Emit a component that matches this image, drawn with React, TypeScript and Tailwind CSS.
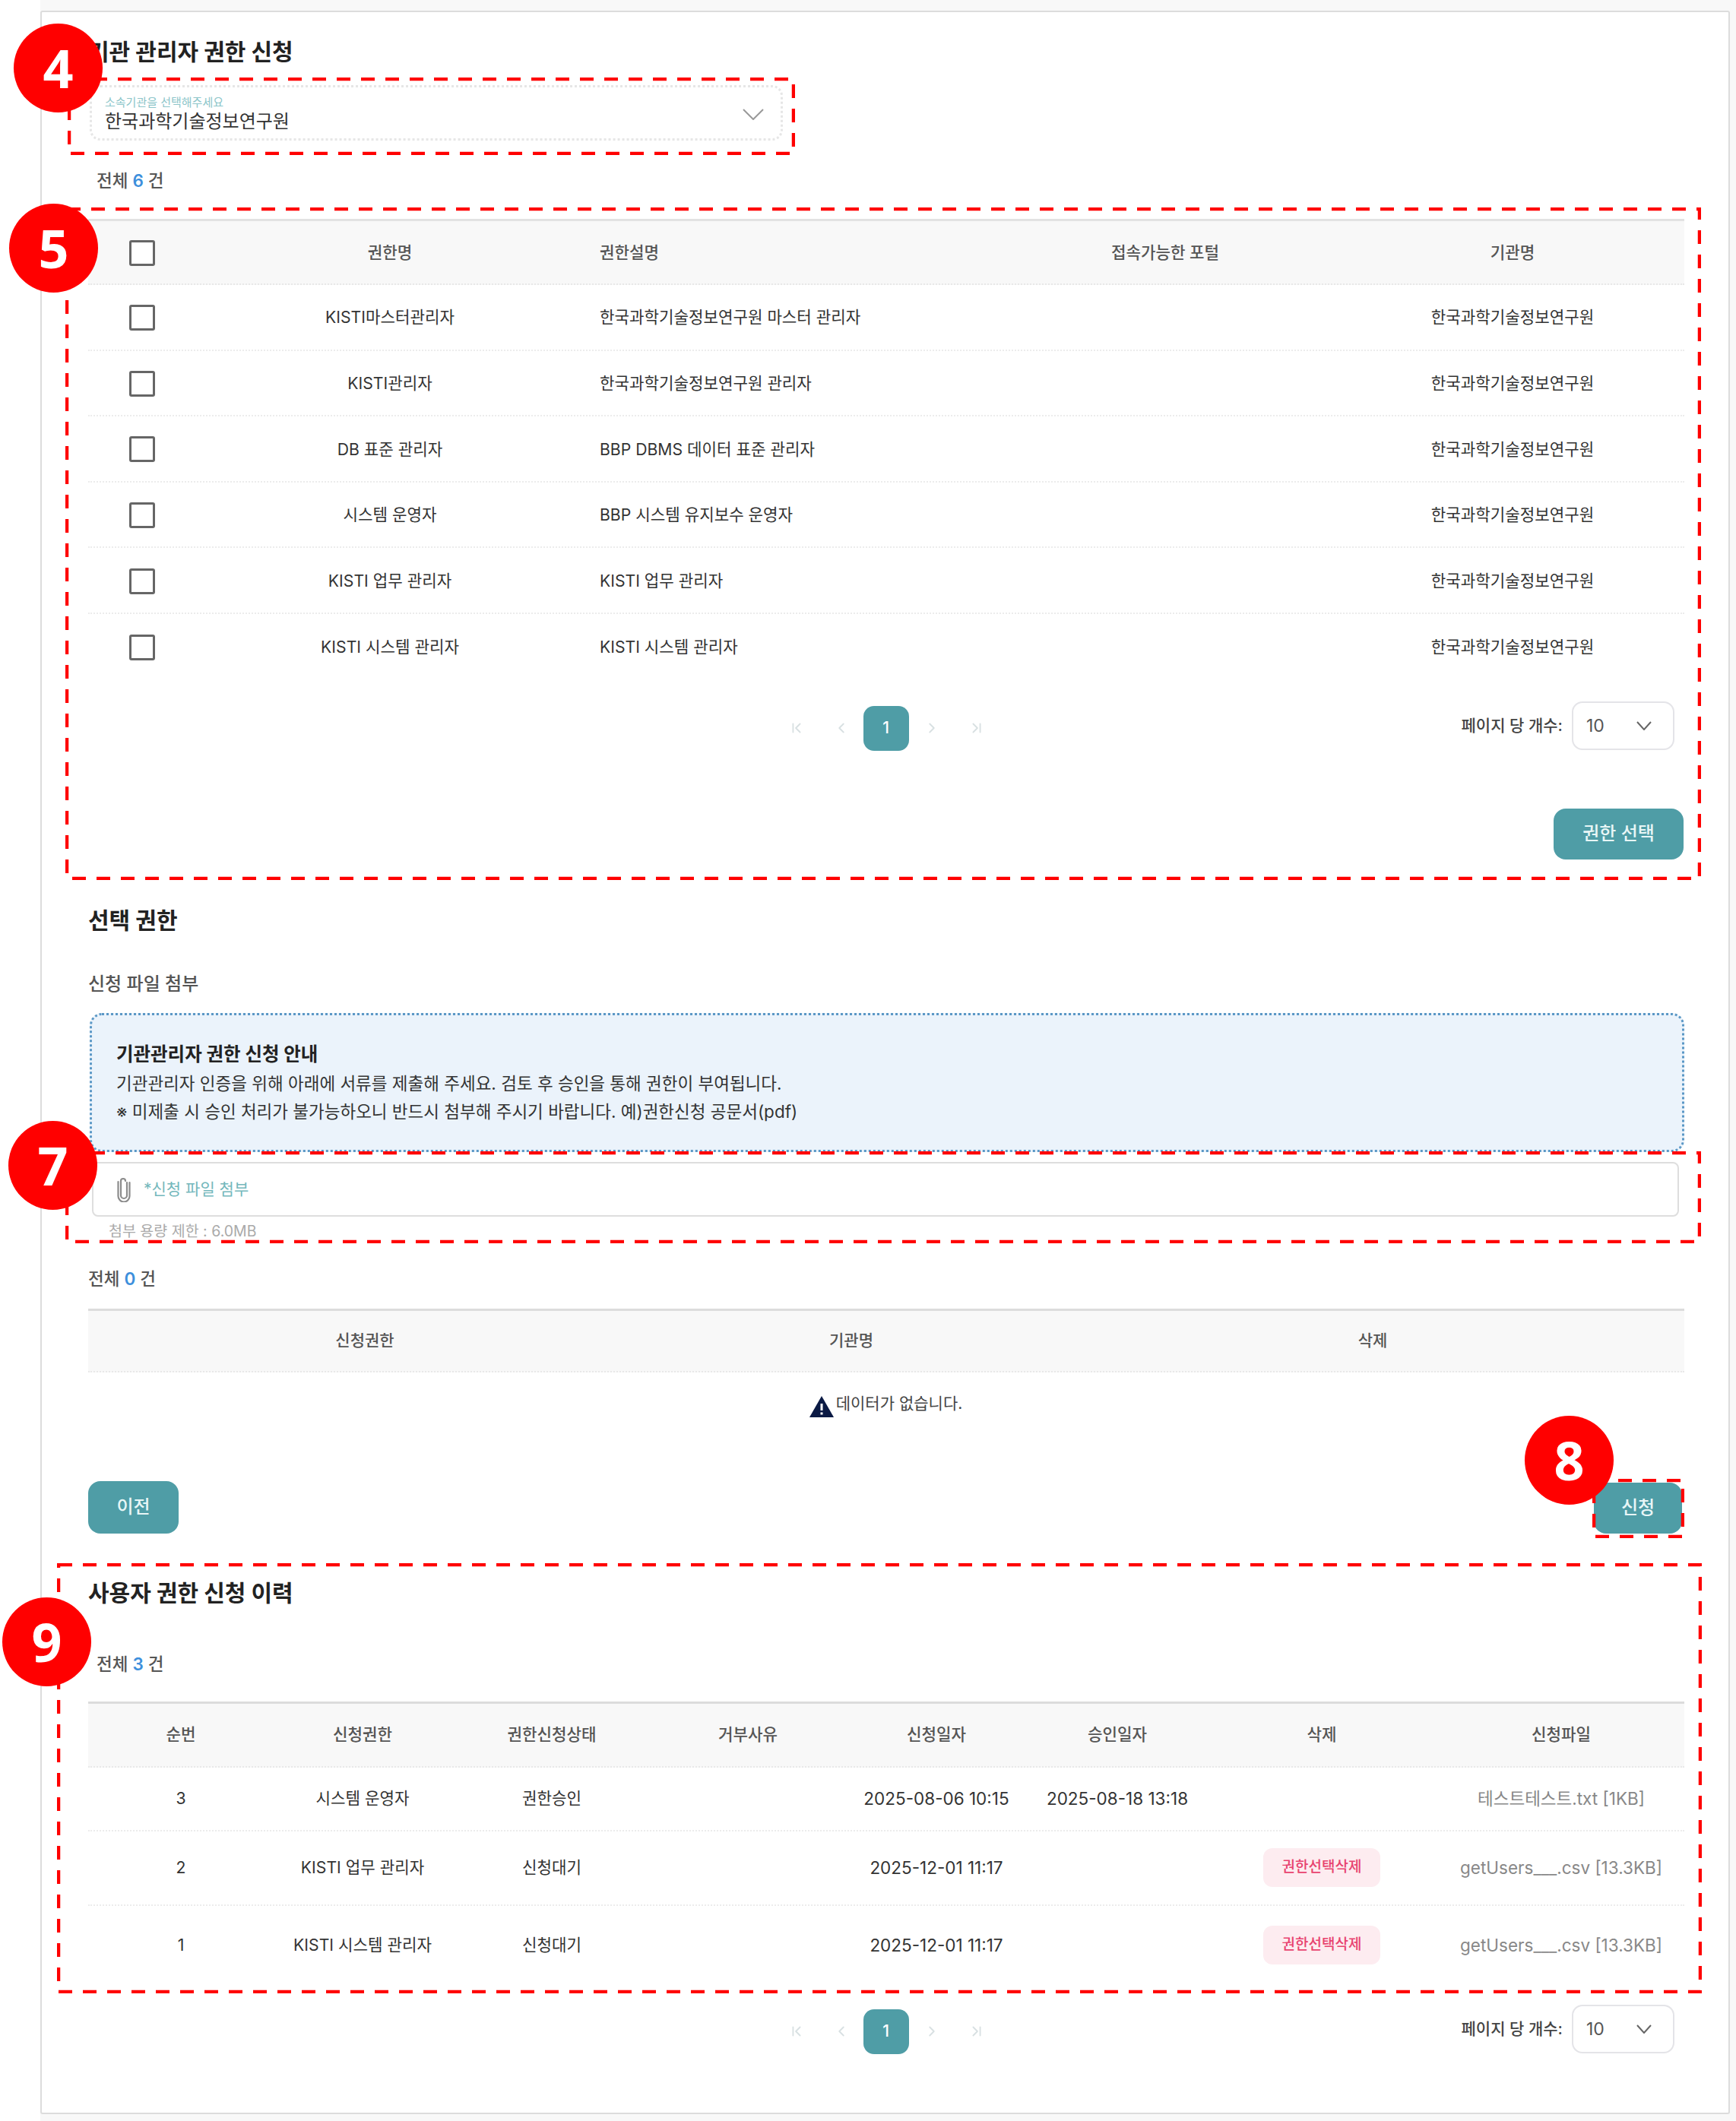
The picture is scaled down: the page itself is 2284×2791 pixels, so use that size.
import React from 'react';
import { ChevronFirst, ChevronLast, ChevronLeft, ChevronRight } from 'lucide-react';

const AUTH_ROWS = [
  ['KISTI마스터관리자', '한국과학기술정보연구원 마스터 관리자'],
  ['KISTI관리자', '한국과학기술정보연구원 관리자'],
  ['DB 표준 관리자', 'BBP DBMS 데이터 표준 관리자'],
  ['시스템 운영자', 'BBP 시스템 유지보수 운영자'],
  ['KISTI 업무 관리자', 'KISTI 업무 관리자'],
  ['KISTI 시스템 관리자', 'KISTI 시스템 관리자'],
];

const HISTORY_ROWS = [
  { no: '3', name: '시스템 운영자', status: '권한승인', applied: '2025-08-06 10:15', approved: '2025-08-18 13:18', del: false, file: '테스트테스트.txt [1KB]', row: 'h-[84px]' },
  { no: '2', name: 'KISTI 업무 관리자', status: '신청대기', applied: '2025-12-01 11:17', approved: '', del: true, file: 'getUsers___.csv [13.3KB]', row: 'h-[98px]' },
  { no: '1', name: 'KISTI 시스템 관리자', status: '신청대기', applied: '2025-12-01 11:17', approved: '', del: true, file: 'getUsers___.csv [13.3KB]', row: 'h-[104px]' },
];

function Count({ n, className }: { n: string; className: string }) {
  return (
    <p className={`h-[30px] text-[22.5px] leading-[30px] font-medium text-[#555] ${className}`}>
      전체 <span className="text-[#3d8fdc] font-semibold">{n}</span> 건
    </p>
  );
}

function Checkbox() {
  return <span className="block w-[34px] h-[34px] border-[3px] border-[#666] rounded-[3px] bg-white" />;
}

function Pagination() {
  return (
    <div className="grid grid-cols-[1fr_auto_1fr] items-center h-[64px]">
      <div />
      <div className="flex items-center mt-[6px] text-[#d8e0e2]">
        <ChevronFirst className="w-[22px] h-[22px] mr-[37px]" />
        <ChevronLeft className="w-[22px] h-[22px] mr-[18px]" />
        <span className="w-[60px] h-[59px] rounded-[14px] bg-[#4f9da6] text-white text-[21px] font-medium flex items-center justify-center">1</span>
        <ChevronRight className="w-[22px] h-[22px] ml-[19px]" />
        <ChevronLast className="w-[22px] h-[22px] ml-[37px]" />
      </div>
      <div className="flex items-center justify-end pr-[13px]">
        <span className="text-[21px] font-medium text-[#444] mr-[12px]">페이지 당 개수:</span>
        <div className="w-[135px] h-[64px] border-2 border-[#e4e4e8] rounded-[14px] bg-white flex items-center justify-between pl-[17px] pr-[28px]">
          <span className="text-[23px] text-[#555]">10</span>
          <svg width="20" height="12" viewBox="0 0 20 12" fill="none" stroke="#666" strokeWidth="2"><polyline points="1,1 10,11 19,1" /></svg>
        </div>
      </div>
    </div>
  );
}

function TealButton({ label, className }: { label: string; className: string }) {
  return (
    <button className={`bg-[#4f9da6] text-[#e8f6f6] text-[24px] font-medium flex items-center justify-center rounded-[16px] ${className}`}>
      {label}
    </button>
  );
}

function DashBox({ w, h, className }: { w: number; h: number; className: string }) {
  return (
    <svg width={w} height={h} className={`absolute pointer-events-none ${className}`} fill="none">
      <rect x="2" y="2" width={w - 4} height={h - 4} stroke="#ff0000" strokeWidth="4.5" strokeDasharray="18 14" />
    </svg>
  );
}

function Marker({ n, className }: { n: string; className: string }) {
  return (
    <div className={`absolute w-[117px] h-[117px] rounded-full bg-[#ff0000] text-white text-[70px] font-bold font-['Noto_Sans',sans-serif] flex items-center justify-center ${className}`}>
      {n}
    </div>
  );
}

export default function App() {
  return (
    <div className="relative pl-[53px] bg-white font-[Inter,'Noto_Sans_CJK_KR',sans-serif] text-[#333]">
      <div className="bg-[#f8f8f8] pt-[14px] pr-[8px] pb-[9px]">
        <div className="bg-white border-2 border-[#dcdcdc] rounded-[3px] pl-[61px] pr-[58px] pt-[32px] pb-[78px]">

          {/* 권한 신청 */}
          <h2 className="h-[40px] text-[30px] leading-[40px] font-bold text-[#222]">기관 관리자 권한 신청</h2>

          <div className="mt-[24px] ml-[2px] w-[912px] h-[73px] border-[3px] border-dotted border-[#e6e6e6] rounded-[14px] pl-[17px] pr-[22px] pt-[4px] flex items-center justify-between">
            <div>
              <p className="text-[15px] leading-[18px] text-[#8cc5c9]">소속기관을 선택해주세요</p>
              <p className="text-[24px] leading-[32px] text-[#333]">한국과학기술정보연구원</p>
            </div>
            <svg width="28" height="15" viewBox="0 0 28 15" fill="none" stroke="#999" strokeWidth="2"><polyline points="1,1 14,14 27,1" /></svg>
          </div>

          <Count n="6" className="mt-[38px] ml-[11px]" />

          <div className="mt-[35px] border-t-[3px] border-[#e2e2e2]">
            <div className="grid grid-cols-[142px_510px_534px_462px_452px] items-center h-[84px] pt-[2px] bg-[#f8f8f8] border-b-2 border-dotted border-[#e8e8e8] text-[21.200px] font-medium text-[#555]">
              <div className="flex justify-center pr-[1px]"><Checkbox /></div>
              <div className="text-center">권한명</div>
              <div className="pl-[21px]">권한설명</div>
              <div className="text-center">접속가능한 포털</div>
              <div className="text-center">기관명</div>
            </div>
            {AUTH_ROWS.map(([name, desc], i) => (
              <div key={name} className={`grid grid-cols-[142px_510px_534px_462px_452px] items-center h-[86.6px] pt-[2px] text-[21.200px] ${i < 5 ? 'border-b-2 border-dotted border-[#ececec]' : ''}`}>
                <div className="flex justify-center pr-[1px]"><Checkbox /></div>
                <div className="text-center">{name}</div>
                <div className="pl-[21px]">{desc}</div>
                <div />
                <div className="text-center">한국과학기술정보연구원</div>
              </div>
            ))}
          </div>

          <div className="mt-[28px]"><Pagination /></div>

          <div className="mt-[77px] flex justify-end pr-[1px]">
            <TealButton label="권한 선택" className="w-[171px] h-[67px]" />
          </div>

          {/* 선택 권한 */}
          <h2 className="mt-[60px] h-[40px] text-[30px] leading-[40px] font-bold text-[#222]">선택 권한</h2>
          <p className="mt-[48px] h-[32px] text-[24px] leading-[32px] font-medium text-[#555]">신청 파일 첨부</p>

          <div className="mt-[22px] ml-[2px] h-[183px] pt-[3px] bg-[#ebf3fb] border-[3px] border-dotted border-[#5b98c6] rounded-[16px] pl-[32px] flex flex-col justify-center text-[22.500px] leading-[37.5px]">
            <p className="font-bold text-[24.500px] text-[#222]">기관관리자 권한 신청 안내</p>
            <p>기관관리자 인증을 위해 아래에 서류를 제출해 주세요. 검토 후 승인을 통해 권한이 부여됩니다.</p>
            <p>※ 미제출 시 승인 처리가 불가능하오니 반드시 첨부해 주시기 바랍니다. 예)권한신청 공문서(pdf)</p>
          </div>

          <div className="mt-[13px] ml-[5px] mr-[7px] h-[72px] border-2 border-[#dedede] rounded-[8px] flex items-center pl-[30px]">
            <svg width="20" height="34" viewBox="0 0 20 34" fill="none" stroke="#8c8c8c" strokeWidth="2.2" strokeLinecap="round">
              <path d="M14 8v17a4 4 0 0 1-8 0V6a3 3 0 0 1 6 0" />
              <path d="M17.5 8v18a7.500 7.500 0 0 1-15 0V7" />
            </svg>
            <span className="ml-[16px] text-[21px] text-[#74b8bc]">*신청 파일 첨부</span>
          </div>
          <p className="mt-[5px] ml-[27px] h-[28px] text-[19.500px] leading-[28px] text-[#aaa]">첨부 용량 제한 : 6.0MB</p>

          <Count n="0" className="mt-[34px]" />

          <div className="mt-[24px] border-t-[3px] border-[#dcdcdc]">
            <div className="grid grid-cols-[728px_552px_820px] items-center h-[81px] bg-[#f8f8f8] border-b-2 border-dotted border-[#e8e8e8] text-[21px] font-medium text-[#555]">
              <div className="text-center">신청권한</div>
              <div className="text-center">기관명</div>
              <div className="text-center">삭제</div>
            </div>
            <div className="mt-[28px] h-[30px] flex items-center justify-center text-[21px] text-[#444]">
              <svg width="34" height="30" viewBox="0 0 34 30" className="mr-[2px] mt-[4px] -ml-[2px]">
                <path d="M17 1 33 29H1Z" fill="#0b1a44" />
                <rect x="15.500" y="11" width="3" height="9" fill="#fff" />
                <rect x="15.500" y="22.500" width="3" height="3" fill="#fff" />
              </svg>
              <span className="-mt-[4px]">데이터가 없습니다.</span>
            </div>
          </div>

          <div className="mt-[85px] flex items-end justify-between pr-[3px]">
            <TealButton label="이전" className="w-[119px] h-[69px]" />
            <TealButton label="신청" className="w-[116px] h-[67px]" />
          </div>

          {/* 신청 이력 */}
          <h2 className="mt-[58px] h-[40px] text-[30px] leading-[40px] font-bold text-[#222]">사용자 권한 신청 이력</h2>
          <Count n="3" className="mt-[59px] ml-[11px]" />

          <div className="mt-[34px] border-t-[3px] border-[#dcdcdc]">
            <div className="grid grid-cols-[244px_234px_264px_252px_244px_232px_306px_324px] items-center text-center h-[84px] bg-[#f8f8f8] border-b-2 border-dotted border-[#e8e8e8] text-[21.200px] font-medium text-[#555]">
              <div>순번</div>
              <div>신청권한</div>
              <div>권한신청상태</div>
              <div>거부사유</div>
              <div>신청일자</div>
              <div>승인일자</div>
              <div>삭제</div>
              <div>신청파일</div>
            </div>
            {HISTORY_ROWS.map((r, i) => (
              <div key={r.no} className={`grid grid-cols-[244px_234px_264px_252px_244px_232px_306px_324px] items-center text-center text-[21.200px] ${r.row} ${i < 2 ? 'border-b-2 border-dotted border-[#ececec]' : ''}`}>
                <div>{r.no}</div>
                <div>{r.name}</div>
                <div>{r.status}</div>
                <div />
                <div className="text-[22.500px]">{r.applied}</div>
                <div className="text-[22.500px]">{r.approved}</div>
                <div className="flex justify-center">
                  {r.del && (
                    <span className="w-[154px] h-[51px] rounded-[12px] bg-[#fdecf0] text-[#e8436f] text-[19px] font-medium flex items-center justify-center">권한선택삭제</span>
                  )}
                </div>
                <div className="text-[22.500px] text-[#888]">{r.file}</div>
              </div>
            ))}
          </div>

          <div className="mt-[26px]"><Pagination /></div>
        </div>
      </div>

      {/* 설명용 표시 */}
      <DashBox w={957} h={102} className="left-[89px] top-[102px]" />
      <DashBox w={2152} h={885} className="left-[86px] top-[273px]" />
      <DashBox w={2152} h={121} className="left-[86px] top-[1515px]" />
      <DashBox w={121} h={78} className="left-[2095px] top-[1946px]" />
      <DashBox w={2164} h={566} className="left-[75px] top-[2057px]" />
      <Marker n="4" className="left-[18px] top-[31px]" />
      <Marker n="5" className="left-[12px] top-[268px]" />
      <Marker n="7" className="left-[11px] top-[1475px]" />
      <Marker n="8" className="left-[2006px] top-[1863px]" />
      <Marker n="9" className="left-[3px] top-[2102px]" />
    </div>
  );
}
